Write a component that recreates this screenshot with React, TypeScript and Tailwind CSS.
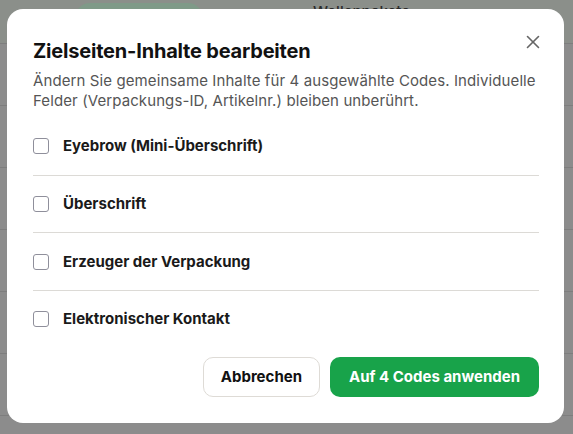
import { X } from 'lucide-react'

const fields = [
  'Eyebrow (Mini-Überschrift)',
  'Überschrift',
  'Erzeuger der Verpackung',
  'Elektronischer Kontakt',
]

export default function App() {
  return (
    <div className="relative h-[434px] w-full overflow-hidden bg-[#8c8c8c] font-['Inter',sans-serif]">
      {/* gedimmte Seite im Hintergrund */}
      <div className="flex h-[44px] items-start gap-[110px] border-b border-[#7e7e7e] bg-[#8b8f8a] pl-[75px]">
        <div className="mt-[3px] h-[30px] w-[128px] rounded-full bg-[#7f9a88]" />
        <span className="mt-[1px] text-[15px] font-medium text-[#2a2a2a]">Wellenpakete</span>
      </div>
      {[0, 1, 2, 3, 4, 5].map((i) => (
        <div key={i} className="h-[62px] border-b border-[#7e7e7e]" />
      ))}

      {/* Dialog */}
      <div className="absolute inset-0 flex items-start justify-start pl-[7px] pt-[9px]">
        <div className="w-[557px] rounded-2xl bg-white pl-[26px] pr-[25px] pt-7 pb-[26px]">
          <div className="flex items-start justify-between">
            <h2 className="text-[20px] font-bold leading-7 tracking-[-0.2px] text-[#111]">Zielseiten-Inhalte bearbeiten</h2>
            <button className="-mr-[5px] -mt-[6px] text-[#666]">
              <X size={22} strokeWidth={1.75} />
            </button>
          </div>
          <p className="mt-1.5 text-[15px] leading-5 tracking-[0.1px] text-[#555]">
            Ändern Sie gemeinsame Inhalte für 4 ausgewählte Codes. Individuelle Felder (Verpackungs-ID, Artikelnr.) bleiben unberührt.
          </p>

          <div className="mt-[7px]">
            {fields.map((f, idx) => (
              <label
                key={f}
                className={`flex items-center gap-3.5 py-[16.35px] ${idx < fields.length - 1 ? 'border-b border-[#dcdad6]' : ''}`}
              >
                <span className="h-4 w-4 flex-shrink-0 rounded-[3px] border border-[#8f8f9b] bg-white" />
                <span className="text-[15px] font-bold leading-6 text-[#1a1a1a]">{f}</span>
              </label>
            ))}
          </div>

          <div className="mt-[9px] flex justify-end gap-2.5">
            <button className="h-10 rounded-[10px] border border-[#dedbd6] bg-white px-[17px] text-[15px] font-bold text-[#111]">
              Abbrechen
            </button>
            <button className="h-10 rounded-[10px] bg-[#18a34a] px-[19px] text-[15px] font-bold text-white">
              Auf 4 Codes anwenden
            </button>
          </div>
        </div>
      </div>
    </div>
  )
}
